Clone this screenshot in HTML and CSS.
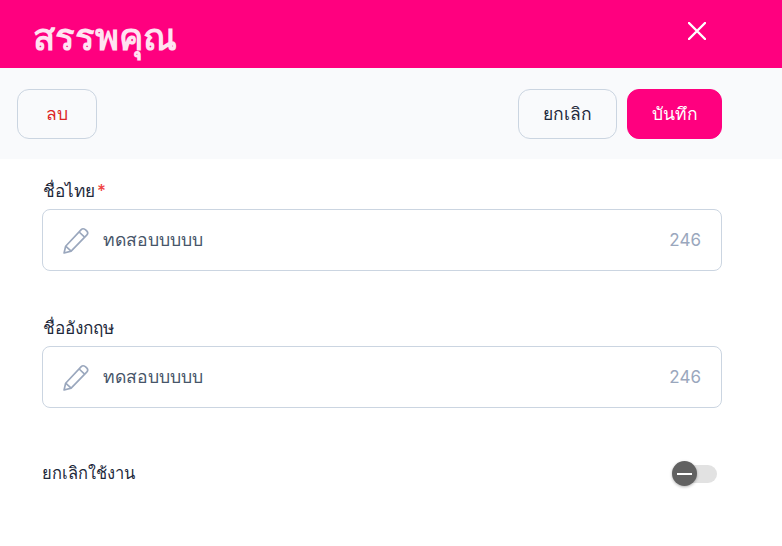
FILE: index.html
```html
<!DOCTYPE html>
<html lang="th">
<head>
<meta charset="utf-8">
<title>สรรพคุณ</title>
<link rel="stylesheet" href="styles.css">
</head>
<body>
<header class="topbar">
  <h1 class="title">สรรพคุณ</h1>
  <button class="close" aria-label="ปิด">
    <svg width="18" height="18" viewBox="0 0 18 18"><path d="M1 1L17 17M17 1L1 17" stroke="#fff" stroke-width="2.4" stroke-linecap="round"/></svg>
  </button>
</header>
<div class="actions">
  <button class="btn btn-del">ลบ</button>
  <div class="actions-right">
    <button class="btn btn-cancel">ยกเลิก</button>
    <button class="btn btn-save">บันทึก</button>
  </div>
</div>
<main class="form">
  <div class="field">
    <label class="label">ชื่อไทย<span class="req">*</span></label>
    <div class="input">
      <svg class="pencil" width="27" height="27" viewBox="0 0 26 26" fill="none" stroke="#9aa7bd" stroke-width="1.6" stroke-linejoin="round"><path d="M2 25L3.5 18.5L18.5 2.5C19.5 1.5 21 1.5 22.5 2.5L24 4C25 5.2 25 6.5 24 7.5L8.8 23.2Z"/><path d="M16.5 4.8L22 10M3.5 18.5L8.8 23.2"/></svg>
      <span class="value">ทดสอบบบบบ</span>
      <span class="count">246</span>
    </div>
  </div>
  <div class="field">
    <label class="label">ชื่ออังกฤษ</label>
    <div class="input">
      <svg class="pencil" width="27" height="27" viewBox="0 0 26 26" fill="none" stroke="#9aa7bd" stroke-width="1.6" stroke-linejoin="round"><path d="M2 25L3.5 18.5L18.5 2.5C19.5 1.5 21 1.5 22.5 2.5L24 4C25 5.2 25 6.5 24 7.5L8.8 23.2Z"/><path d="M16.5 4.8L22 10M3.5 18.5L8.8 23.2"/></svg>
      <span class="value">ทดสอบบบบบ</span>
      <span class="count">246</span>
    </div>
  </div>
  <div class="toggle-row">
    <span class="toggle-label">ยกเลิกใช้งาน</span>
    <div class="toggle">
      <span class="track"></span>
      <span class="knob"><span class="minus"></span></span>
    </div>
  </div>
</main>
</body>
</html>
```
FILE: styles.css
```css
* { box-sizing: border-box; }
html, body { margin: 0; padding: 0; }
body {
  width: 782px;
  height: 546px;
  overflow: hidden;
  background: #fff;
  font-family: Inter, "Noto Sans", sans-serif;
  color: #1e293b;
}
.topbar {
  height: 68px;
  background: #ff007f;
  display: flex;
  justify-content: space-between;
  align-items: flex-start;
  padding: 0 75px 0 33px;
}
.title {
  margin: 15px 0 0;
  font-size: 36.5px;
  line-height: 44px;
  font-weight: 600;
  color: #ffe3f1;
}
.close {
  margin-top: 21px;
  padding: 0;
  border: 0;
  background: none;
  width: 20px;
  height: 20px;
  display: flex;
  align-items: center;
  justify-content: center;
}
.actions {
  height: 91px;
  background: #f9fafc;
  padding: 21px 60px 0 17px;
  display: flex;
  justify-content: space-between;
  align-items: flex-start;
}
.actions-right { display: flex; gap: 10px; }
.btn {
  height: 50px;
  border-radius: 12px;
  border: 1px solid #cbd5e1;
  background: transparent;
  font-family: inherit;
  font-size: 17.5px;
  font-weight: 500;
  padding: 0;
}
.btn-del { width: 80px; color: #dc2626; }
.btn-cancel { width: 99px; color: #1e293b; }
.btn-save { width: 95px; background: #ff007f; border-color: #ff007f; color: #fff; }
.form { padding: 19px 60px 0 42px; }
.field { margin-bottom: 44px; }
.label {
  display: block;
  height: 31px;
  padding-left: 1px;
  font-size: 17.2px;
  line-height: 26px;
  font-weight: 500;
  color: #1e293b;
}
.req { color: #ef4444; margin-left: 2px; }
.input {
  height: 62px;
  border: 1px solid #cbd5e1;
  border-radius: 8px;
  background: #fff;
  display: flex;
  align-items: center;
  padding: 0 20px 0 19px;
}
.pencil { flex: none; margin-right: 14px; }
.value { flex: 1; font-size: 17.6px; font-weight: 500; color: #475569; }
.count { font-size: 17px; color: #9aa7bd; }
.toggle-row {
  display: flex;
  justify-content: space-between;
  align-items: center;
  margin-top: 50px;
  height: 30px;
}
.toggle-label { font-size: 16.5px; font-weight: 500; color: #1e293b; }
.toggle { position: relative; width: 46px; height: 26px; margin-right: 5px; }
.track {
  position: absolute;
  left: 5px;
  top: 5px;
  width: 41px;
  height: 18px;
  border-radius: 9px;
  background: #e2e2e2;
}
.knob {
  position: absolute;
  left: 1px;
  top: 1px;
  width: 25px;
  height: 25px;
  border-radius: 50%;
  background: #616161;
  box-shadow: 0 1px 3px rgba(0,0,0,.3);
  display: flex;
  align-items: center;
  justify-content: center;
}
.minus { width: 15px; height: 2px; background: #fff; }
```
